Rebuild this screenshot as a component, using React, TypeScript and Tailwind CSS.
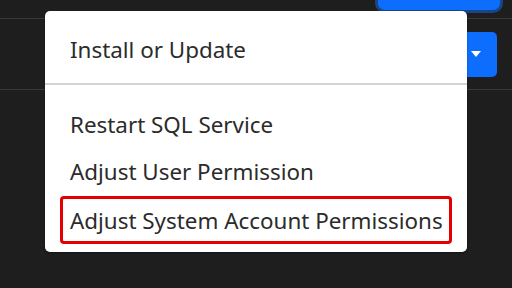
import { useState } from "react"

const items = ["Restart SQL Service", "Adjust User Permission"]

export default function App() {
  const [open] = useState(true)

  return (
    <div className="relative h-[288px] w-[512px] overflow-hidden bg-[#1e1e1e] font-['Noto_Sans',sans-serif]">
      <div className="flex h-[19px] justify-end border-b border-[#383838] pr-[12px]">
        <button className="-mt-[20px] h-[30px] w-[122px] rounded-[7px] bg-[#0d6efd] ring-[3px] ring-[#1a4685]" />
      </div>
      <div className="flex h-[71px] items-center justify-end border-b border-[#383838] pr-[15px]">
        <button className="flex h-[45px] w-[42px] items-center justify-center rounded-r-[5px] bg-[#0d6efd]">
          <span className="h-0 w-0 border-x-[5px] border-t-[6px] border-x-transparent border-t-white" />
        </button>
      </div>

      {open && (
        <div className="absolute left-[45px] top-[11px] w-[422px] whitespace-nowrap rounded-[5px] bg-white pb-[8px] pt-[14px] text-[22.4px] text-[#2b2b2b] shadow-[0_1px_2px_rgba(0,0,0,0.4)]">
          <div className="flex h-[47px] items-center px-[25px] pt-[3px]">Install or Update</div>
          <div className="mt-[11px] h-[2px] bg-[#d4d4d4]" />
          <div className="mt-[15px] px-[15px]">
            {items.map((label) => (
              <div key={label} className="flex h-[47px] items-center px-[10px] pt-[2px]">
                {label}
              </div>
            ))}
            <div className="mt-[2px] flex h-[48px] items-center rounded-[4px] border-[3px] border-[#e50000] pl-[7px] pt-[2px]">
              Adjust System Account Permissions
            </div>
          </div>
        </div>
      )}
    </div>
  )
}
